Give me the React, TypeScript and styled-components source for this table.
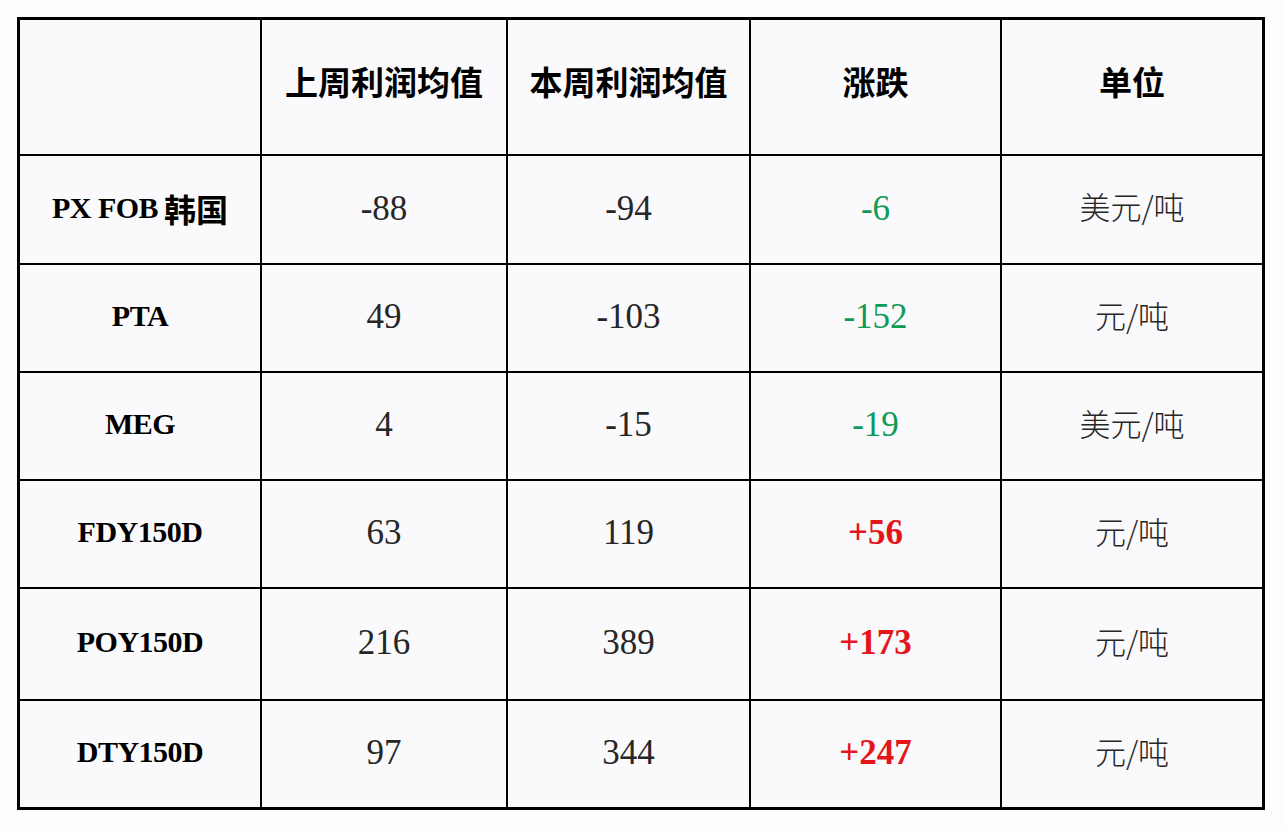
import React from "react";
import styled, { createGlobalStyle } from "styled-components";

const Global = createGlobalStyle`
  html, body {
    margin: 0;
    padding: 0;
    background: #fdfdfd;
  }
  * { box-sizing: border-box; }
`;

const Page = styled.div`
  padding: 17px 0 0 17px;
  width: 1284px;
  height: 830px;
`;

const Grid = styled.div`
  display: grid;
  grid-template-columns: 242px 246px 243px 251px 260px;
  grid-template-rows: 136px 109px 108px 108px 108px 112px 106px;
  width: max-content;
  border: 3px solid #000;
  background: #faf9fb;
`;

type Kind = "head" | "label" | "num" | "up" | "down" | "unit" | "empty";

const Cell = styled.div<{ $lastCol: boolean; $lastRow: boolean; $kind: Kind }>`
  display: flex;
  align-items: center;
  justify-content: center;
  border-right: ${(p) => (p.$lastCol ? "none" : "2px solid #000")};
  border-bottom: ${(p) => (p.$lastRow ? "none" : "2px solid #000")};
  white-space: nowrap;
  color: ${(p) =>
    p.$kind === "up" ? "#e3161c" : p.$kind === "down" ? "#0f9a55" : p.$kind === "num" || p.$kind === "unit" ? "#262626" : "#000"};
  font-family: ${(p) =>
    p.$kind === "head" || p.$kind === "unit"
      ? `"Noto Sans CJK SC", sans-serif`
      : `"Liberation Serif", "Noto Sans CJK SC", serif`};
  font-size: ${(p) =>
    p.$kind === "head" ? "33px" : p.$kind === "label" ? "30px" : p.$kind === "unit" ? "31px" : "35px"};
  font-weight: ${(p) =>
    p.$kind === "head" || p.$kind === "label" || p.$kind === "up" ? 700 : p.$kind === "unit" ? 300 : 400};
  letter-spacing: ${(p) => (p.$kind === "label" ? "-0.5px" : "0")};
  padding-bottom: ${(p) =>
    p.$kind === "head" ? "13px" : p.$kind === "unit" ? "8px" : p.$kind === "label" ? "4px" : "2px"};
`;

const Cjk = styled.span`
  font-size: 32px;
  margin-left: 6px;
  letter-spacing: 0;
`;

const headers = ["", "上周利润均值", "本周利润均值", "涨跌", "单位"];

const rows: [string, string, string, string, string][] = [
  ["PX FOB韩国", "-88", "-94", "-6", "美元/吨"],
  ["PTA", "49", "-103", "-152", "元/吨"],
  ["MEG", "4", "-15", "-19", "美元/吨"],
  ["FDY150D", "63", "119", "+56", "元/吨"],
  ["POY150D", "216", "389", "+173", "元/吨"],
  ["DTY150D", "97", "344", "+247", "元/吨"],
];

function renderLabel(v: string) {
  const m = v.match(/^([\x00-\x7f]*)(.*)$/);
  if (m && m[2]) {
    return (
      <>
        {m[1]}
        <Cjk>{m[2]}</Cjk>
      </>
    );
  }
  return v;
}

export default function App() {
  const totalRows = rows.length + 1;
  return (
    <Page>
      <Global />
      <Grid>
        {headers.map((h, c) => (
          <Cell key={`h${c}`} $kind={h ? "head" : "empty"} $lastCol={c === 4} $lastRow={false}>
            {h}
          </Cell>
        ))}
        {rows.map((r, ri) =>
          r.map((v, c) => {
            let kind: Kind = "num";
            if (c === 0) kind = "label";
            else if (c === 3) kind = v.startsWith("+") ? "up" : "down";
            else if (c === 4) kind = "unit";
            return (
              <Cell
                key={`${ri}-${c}`}
                $kind={kind}
                $lastCol={c === 4}
                $lastRow={ri + 2 === totalRows}
              >
                {c === 0 ? renderLabel(v) : v}
              </Cell>
            );
          })
        )}
      </Grid>
    </Page>
  );
}
